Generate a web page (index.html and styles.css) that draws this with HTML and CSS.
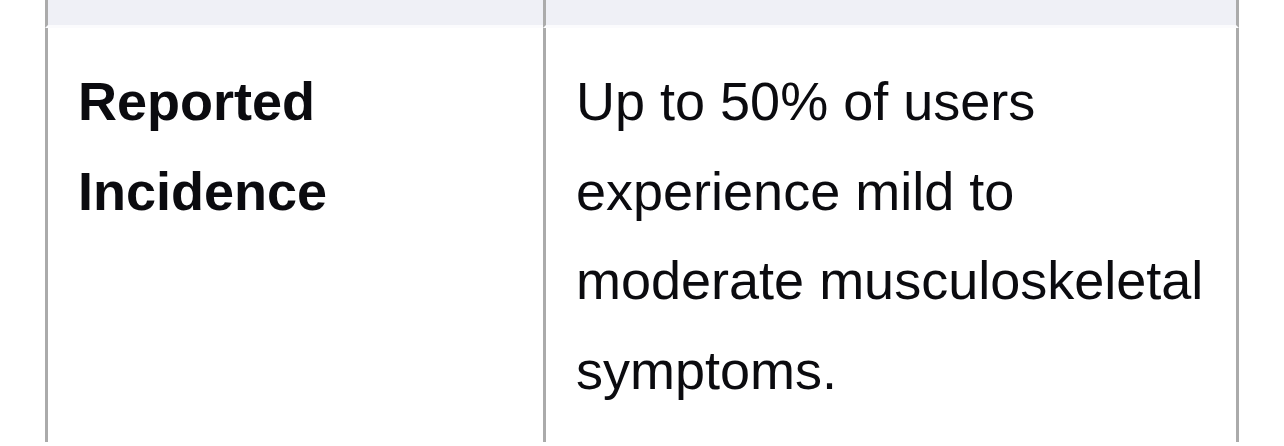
FILE: index.html
```html
<!DOCTYPE html>
<html lang="en">
<head>
<meta charset="utf-8">
<title>Table</title>
<link rel="stylesheet" href="styles.css">
</head>
<body>
<table class="data-table">
  <colgroup>
    <col class="col-label">
    <col class="col-value">
  </colgroup>
  <tbody>
    <tr class="row-prev">
      <td class="cell cell-label"></td>
      <td class="cell cell-value"></td>
    </tr>
    <tr class="row">
      <th class="cell cell-label" scope="row">Reported Incidence</th>
      <td class="cell cell-value">Up to 50% of users experience mild to moderate musculoskeletal symptoms.</td>
    </tr>
  </tbody>
</table>
</body>
</html>
```
FILE: styles.css
```css
html, body {
  margin: 0;
  padding: 0;
  background: #ffffff;
}

body {
  font-family: "Liberation Sans", Arial, Helvetica, sans-serif;
  color: #0b0b0f;
  overflow: hidden;
}

.data-table {
  margin-left: 45px;
  border-collapse: separate;
  border-spacing: 0;
  table-layout: fixed;
  width: 1194px;
}

.col-label {
  width: 498px;
}

.col-value {
  width: 696px;
}

.cell {
  border-left: 3px solid #ababab;
  vertical-align: top;
  text-align: left;
  font-size: 54px;
  line-height: 89.5px;
  padding: 29px 16px 27px 30px;
}

.cell-value {
  border-right: 3px solid #ababab;
  font-weight: 400;
}

.cell-label {
  font-weight: 700;
}

.row-prev .cell {
  height: 25px;
  padding: 0;
  background: #eff0f6;
  border-bottom: 3px solid #fbfbfd;
}
```
